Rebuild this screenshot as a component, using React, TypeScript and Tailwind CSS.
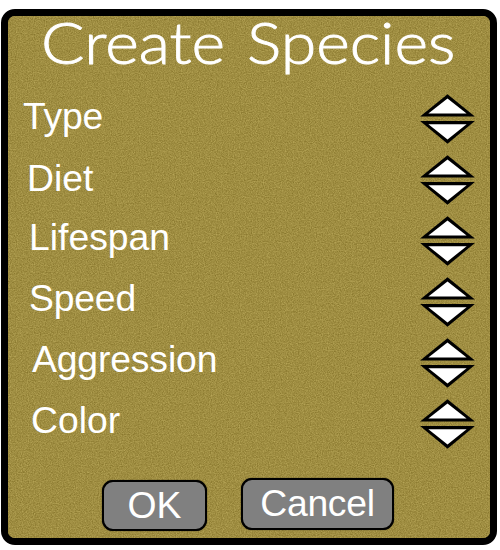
const traits = [
  { name: "Type", place: "pl-[15px] pt-[7px] tracking-[-0.2px]" },
  { name: "Diet", place: "pl-[19px] pt-[8px]" },
  { name: "Lifespan", place: "pl-[21px] pt-[6px]" },
  { name: "Speed", place: "pl-[21px] pt-[6px] tracking-[-0.2px]" },
  { name: "Aggression", place: "pl-[24px] pt-[6px] tracking-[-0.15px]" },
  { name: "Color", place: "pl-[23px] pt-[6px]" },
];

function Grain() {
  return (
    <svg className="pointer-events-none absolute inset-0 h-full w-full rounded-[7px]" aria-hidden="true">
      <filter id="grain" x="0" y="0" width="100%" height="100%" colorInterpolationFilters="sRGB">
        <feTurbulence type="fractalNoise" baseFrequency="0.83 0.87" numOctaves="3" seed="8" />
        <feColorMatrix
          type="matrix"
          values="0.24 0 0 0 0.503  0.24 0 0 0 0.434  0.22 0 0 0 0.147  0 0 0 0 1"
        />
      </filter>
      <rect width="100%" height="100%" filter="url(#grain)" />
    </svg>
  );
}

function Stepper() {
  return (
    <svg className="mt-[5px] h-[50px] w-[55px] shrink-0" viewBox="0 0 55 50">
      <path d="M27.5 0.2 L54.9 22.6 H0.1 Z" fill="#000" />
      <path d="M27.5 4.5 L46.6 19.5 H8.4 Z" fill="#fff" />
      <path d="M0.1 27.1 H54.9 L27.5 49.7 Z" fill="#000" />
      <path d="M8.4 30.2 H46.6 L27.5 45.4 Z" fill="#fff" />
    </svg>
  );
}

export default function App() {
  return (
    <div className="h-[550px] w-[500px] bg-white pt-[9px] pl-px font-['Liberation_Sans',Arial,sans-serif] text-white">
      <div className="relative h-[536px] w-[496px] rounded-[14px] border-[7px] border-black bg-[#9e8c42]">
        <Grain />
        <div className="relative flex h-full flex-col">
          <h1 className="flex h-[73px] shrink-0 pl-[33px] font-[Papyrus,Lato,sans-serif] text-[58px] leading-[51px] font-light whitespace-nowrap [-webkit-text-stroke:0.9px_white]">
            <span className="w-[206px] shrink-0">
              <span className="inline-block origin-left scale-x-[1.11]">Create</span>
            </span>
            <span className="inline-block origin-left scale-x-[1.11]">Species</span>
          </h1>
          <div className="flex flex-col">
            {traits.map((t) => (
              <div key={t.name} className="flex h-[61px] items-start justify-between pr-[15px]">
                <span className={`text-[37.33px] leading-[40px] ${t.place}`}>{t.name}</span>
                <Stepper />
              </div>
            ))}
          </div>
          <div className="flex items-start pt-[22px] pl-[94px] text-[37.33px] leading-[40px]">
            <button className="mt-[3px] mr-[34px] h-[51px] w-[105px] rounded-[11px] border-2 border-black bg-[#808080] pb-px shadow-[0_0_1px_#000]">
              OK
            </button>
            <button className="mt-px h-[52px] w-[153px] rounded-[11px] border-2 border-black bg-[#808080] pb-[2px] tracking-[-0.3px] shadow-[0_0_1px_#000]">
              Cancel
            </button>
          </div>
        </div>
      </div>
    </div>
  );
}
